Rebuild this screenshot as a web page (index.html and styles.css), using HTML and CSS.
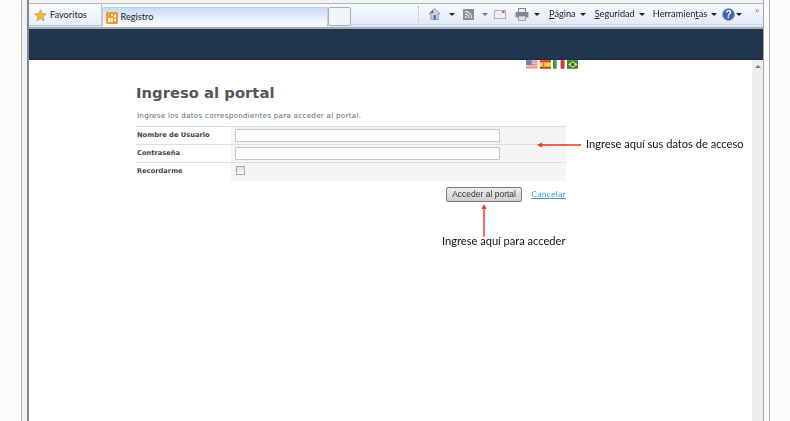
FILE: index.html
```html
<!DOCTYPE html>
<html lang="es">
<head>
<meta charset="utf-8">
<title>Registro</title>
<link rel="stylesheet" href="styles.css">
</head>
<body>
<div class="desktop">
  <div class="frame-left"></div>
  <div class="window">
    <div class="top-strip"></div>
    <div class="toolbar">
      <div class="favorites">
        <svg class="ico-star" viewBox="0 0 14 14"><path d="M7 .8l1.900 4 4.400.5-3.300 3 .9 4.400L7 10.500l-3.900 2.200.9-4.400-3.300-3 4.400-.5z" fill="#f6b73c" stroke="#b98a30" stroke-width=".6"/></svg>
        <span class="tb-text">Favoritos</span>
      </div>
      <div class="tab">
        <svg class="ico-site" viewBox="0 0 12 12"><rect width="12" height="12" rx="1.500" fill="#f79a26"/><rect x="2" y="6" width="2.500" height="4" fill="#fff"/><rect x="5" y="2" width="2" height="2" fill="#fff"/><rect x="5" y="5.500" width="2" height="4.500" fill="#fde3bd"/><rect x="8" y="3" width="2" height="2.500" fill="#fff"/><rect x="8" y="7" width="2" height="2" fill="#fff"/></svg>
        <span class="tb-text">Registro</span>
      </div>
      <div class="new-tab"></div>
      <div class="tools">
        <svg class="ico ico-home" viewBox="0 0 14 14"><path d="M1 7l6-6 6 6h-2v6H3V7z" fill="#c9d3de" stroke="#6d7c8c" stroke-width=".7"/><path d="M2 6l3.500-3.500V6z" fill="#3559a8"/><rect x="6" y="8" width="2.500" height="5" fill="#4a6fb5"/></svg>
        <span class="caret c-home"></span>
        <svg class="ico ico-rss" viewBox="0 0 12 12"><rect width="12" height="12" rx="1" fill="#8b8b8b"/><circle cx="3" cy="9" r="1.200" fill="#eee"/><path d="M2 5.500a4.500 4.500 0 0 1 4.500 4.500M2 2.500a7.500 7.500 0 0 1 7.500 7.500" fill="none" stroke="#eee" stroke-width="1.300"/></svg>
        <span class="caret c-rss"></span>
        <svg class="ico ico-mail" viewBox="0 0 12 9"><rect x=".5" y=".5" width="11" height="8" fill="#f1f1f1" stroke="#aab0b6"/><path d="M.5 .5L6 5l5.500-4.500" fill="none" stroke="#cfd3d7" stroke-width=".7"/><rect x="8" y="1" width="2.500" height="2" fill="#d9584a"/></svg>
        <svg class="ico ico-print" viewBox="0 0 14 13"><rect x="3.500" y=".5" width="7" height="4" fill="#e8edf2" stroke="#7d858d"/><rect x=".5" y="4" width="13" height="5.500" rx="1" fill="#7f878f"/><rect x="3.500" y="8" width="7" height="4.500" fill="#dce3ea" stroke="#7d858d" stroke-width=".7"/></svg>
        <span class="caret c-print"></span>
        <span class="tb-text menu m-pagina"><u>P</u>ágina</span>
        <span class="caret c-menu"></span>
        <span class="tb-text menu m-seg"><u>S</u>eguridad</span>
        <span class="caret c-menu"></span>
        <span class="tb-text menu m-herr">Herramien<u>t</u>as</span>
        <span class="caret c-menu"></span>
        <svg class="ico ico-help" viewBox="0 0 14 14"><circle cx="7" cy="7" r="6.500" fill="#3f63b5" stroke="#a3adbb"/><text x="7" y="11" class="help-q">?</text></svg>
        <span class="caret c-help"></span>
        <span class="chev">»</span>
      </div>
    </div>
    <div class="sep"></div>
    <div class="header-bar"></div>
    <div class="content">
      <div class="page">
        <div class="flags">
          <svg class="flag" viewBox="0 0 12 9"><rect width="12" height="9" fill="#f4b5b0"/><path d="M0 1.500h12M0 4.500h12M0 7.500h12" stroke="#e98a85" stroke-width="1"/><rect width="6" height="5" fill="#6d80c0"/></svg>
          <svg class="flag" viewBox="0 0 12 9"><rect width="12" height="9" fill="#e8352a"/><rect y="2.200" width="12" height="4.600" fill="#fbd83e"/><rect x="2.500" y="3" width="2" height="3" fill="#c9792b"/></svg>
          <svg class="flag" viewBox="0 0 12 9"><rect width="4" height="9" fill="#2f9f45"/><rect x="4" width="4" height="9" fill="#fdfdfd"/><rect x="8" width="4" height="9" fill="#e5323a"/></svg>
          <svg class="flag" viewBox="0 0 12 9"><rect width="12" height="9" fill="#2a8c3e"/><path d="M6 1l5 3.500L6 8 1 4.500z" fill="#f3dc3a"/><circle cx="6" cy="4.500" r="1.800" fill="#2f4f9c"/></svg>
        </div>
        <h1 class="title">Ingreso al portal</h1>
        <p class="intro">Ingrese los datos correspondientes para acceder al portal.</p>
        <div class="form">
          <div class="row">
            <div class="label">Nombre de Usuario</div>
            <div class="field"><input class="input" type="text"></div>
          </div>
          <div class="row">
            <div class="label">Contraseña</div>
            <div class="field"><input class="input" type="password"></div>
          </div>
          <div class="row row-last">
            <div class="label">Recordarme</div>
            <div class="field"><span class="check"></span></div>
          </div>
        </div>
        <div class="actions">
          <button class="btn" type="button">Acceder al portal</button>
          <a class="cancel" href="#">Cancelar</a>
        </div>
      </div>
      <div class="scrollbar"><span class="scroll-up"></span></div>
    </div>
  </div>
  <div class="frame-right"></div>
  <svg class="arrows" viewBox="0 0 790 421" width="790" height="421"><path d="M541 145H581" stroke="#f0341c" stroke-width="1.400"/><path d="M537 145l5-2.500v5z" fill="#f0341c"/><path d="M484 208V237" stroke="#f0341c" stroke-width="1.400"/><path d="M484 204l-2.500 5h5z" fill="#f0341c"/></svg>
  <div class="note note-data">Ingrese aquí sus datos de acceso</div>
  <div class="note note-btn">Ingrese aquí para acceder</div>
</div>
</body>
</html>
```
FILE: styles.css
```css
* { box-sizing: border-box; }
html, body { margin: 0; padding: 0; }
body { width: 790px; height: 421px; overflow: hidden; background: #fefcfa; }
.desktop { position: relative; display: flex; width: 790px; height: 421px; padding-left: 21px; filter: blur(.35px); }
.frame-left { width: 8px; height: 421px; background: linear-gradient(90deg, #a9abad 0 1px, #eef1f5 1px 6px, #85888b 6px 8px); }
.frame-right { width: 7px; height: 421px; background: linear-gradient(90deg, #a4a7aa 0 1px, #fdfdfe 1px 6px, #a9abad 6px 7px); }
.window { width: 734px; height: 421px; display: flex; flex-direction: column; background: #fff; }
.top-strip { height: 4px; background: linear-gradient(#f3f3f3 0 3px, #b4b6b8 3px 4px); }
.toolbar { height: 23px; display: flex; background: linear-gradient(#f6faff, #dce9f8); font-family: Lato, sans-serif; }
.tb-text { font-size: 9.200px; line-height: 12px; color: #222; white-space: nowrap; }
.favorites { width: 73px; height: 22px; display: flex; align-items: flex-start; padding: 5px 0 0 5px; gap: 3px; border-right: 1px solid #b9c6d6; border-bottom: 1px solid #b9c6d6; border-bottom-right-radius: 2px; background: linear-gradient(#f9fbff, #e6eff9); }
.ico-star { width: 13px; height: 13px; }
.tab { width: 226px; height: 20px; margin-top: 3px; display: flex; align-items: center; padding: 0 0 0 3px; gap: 2.500px; border: 1px solid #c4cdd8; border-bottom: 0; border-radius: 2px 2px 0 0; background: linear-gradient(#c5dcf8, #fff); }
.tab .tb-text { margin-top: -1px; }
.ico-site { width: 12px; height: 12px; }
.new-tab { width: 23px; height: 19px; margin-top: 3px; border: 1px solid #a6aeb8; border-radius: 2px; background: #f2f6fb; }
.tools { flex: 1; display: flex; align-items: center; height: 21px; position: relative; padding-left: 67px; border-bottom: 1px solid #cfd9e6; }
.tools::before { content: ""; height: 16px; width: 0; margin-right: 9px; border-left: 1px dotted #a9b4c0; }
.ico { display: block; flex: none; }
.ico-home { width: 13px; height: 14px; }
.ico-rss { width: 11px; height: 11px; margin-left: 8px; }
.ico-mail { width: 12px; height: 9px; margin-left: 6px; }
.ico-print { width: 14px; height: 13px; margin-left: 9px; }
.ico-help { width: 13px; height: 13px; margin-left: 5px; }
.help-q { font: bold 11px "Liberation Sans", sans-serif; fill: #fff; text-anchor: middle; }
.caret { flex: none; width: 0; height: 0; border: 3px solid transparent; border-top: 3px solid #222; border-bottom: 0; }
.c-home { margin-left: 8px; }
.c-rss { margin-left: 8px; border-top-color: #777; }
.c-print { margin-left: 5px; }
.c-menu { margin-left: 4px; }
.c-help { margin-left: 1px; }
.menu { margin-left: 9px; }
.m-herr { margin-left: 8px; }
.chev { position: absolute; left: 404px; top: 1px; font: 9px/10px "Open Sans", sans-serif; color: #7e93b5; }
.sep { height: 2px; background: #a9adb2; }
.header-bar { height: 31px; background: #21364c; border-bottom: 1px solid #1a2b3d; }
.content { flex: 1; display: flex; min-height: 0; }
.page { flex: 1; padding-left: 107px; font-family: "DejaVu Sans", sans-serif; }
.flags { width: 442px; height: 10px; display: flex; justify-content: flex-end; gap: 2px; }
.flag { width: 11.500px; height: 9px; display: block; }
.title { margin: 13px 0 0; font-size: 14.800px; line-height: 20px; font-weight: bold; color: #555; }
.intro { margin: 7px 0 0 1px; font-size: 7.200px; line-height: 12px; color: #5e6b70; letter-spacing: .25px; white-space: nowrap; }
.form { margin-top: 4px; width: 430px; border-top: 1px solid #dedede; }
.row { display: flex; height: 18px; border-bottom: 1px solid #dedede; }
.row-last { border-bottom: 0; }
.label { width: 95px; padding: 3px 0 0 1px; font-size: 6.700px; line-height: 11px; font-weight: bold; color: #444; white-space: nowrap; }
.field { flex: 1; background: #f5f5f5; padding: 2px 0 0 4px; }
.input { display: block; width: 265px; height: 13px; padding: 0; border: 1px solid #c6c6c6; border-radius: 1px; background: #fff; }
.check { display: block; width: 9px; height: 9px; margin: 1px 0 0 1px; border: 1px solid #a8a8a8; background: linear-gradient(#e2e2e2, #f7f7f7); }
.actions { width: 430px; margin-top: 6px; display: flex; justify-content: flex-end; align-items: center; gap: 10px; }
.btn { width: 76px; height: 15px; padding: 0 0 0 1px; font: 8.500px/13px "Liberation Sans", sans-serif; color: #333; border: 1px solid #777; border-radius: 2px; background: linear-gradient(#eee, #cfcfcf); }
.cancel { font: 7.800px/12px "DejaVu Sans", sans-serif; color: #3a96d0; text-decoration: underline; }
.scrollbar { width: 11px; background: #eeeeee; position: relative; }
.scroll-up { position: absolute; left: 3px; top: 5px; width: 0; height: 0; border: 3px solid transparent; border-bottom: 3px solid #777; border-top: 0; }
.arrows { position: absolute; left: 0; top: 0; pointer-events: none; }
.note { position: absolute; font: 11.100px/14px Lato, sans-serif; color: #111; white-space: nowrap; }
.note-data { left: 586px; top: 137px; }
.note-btn { left: 442px; top: 234px; }
```
